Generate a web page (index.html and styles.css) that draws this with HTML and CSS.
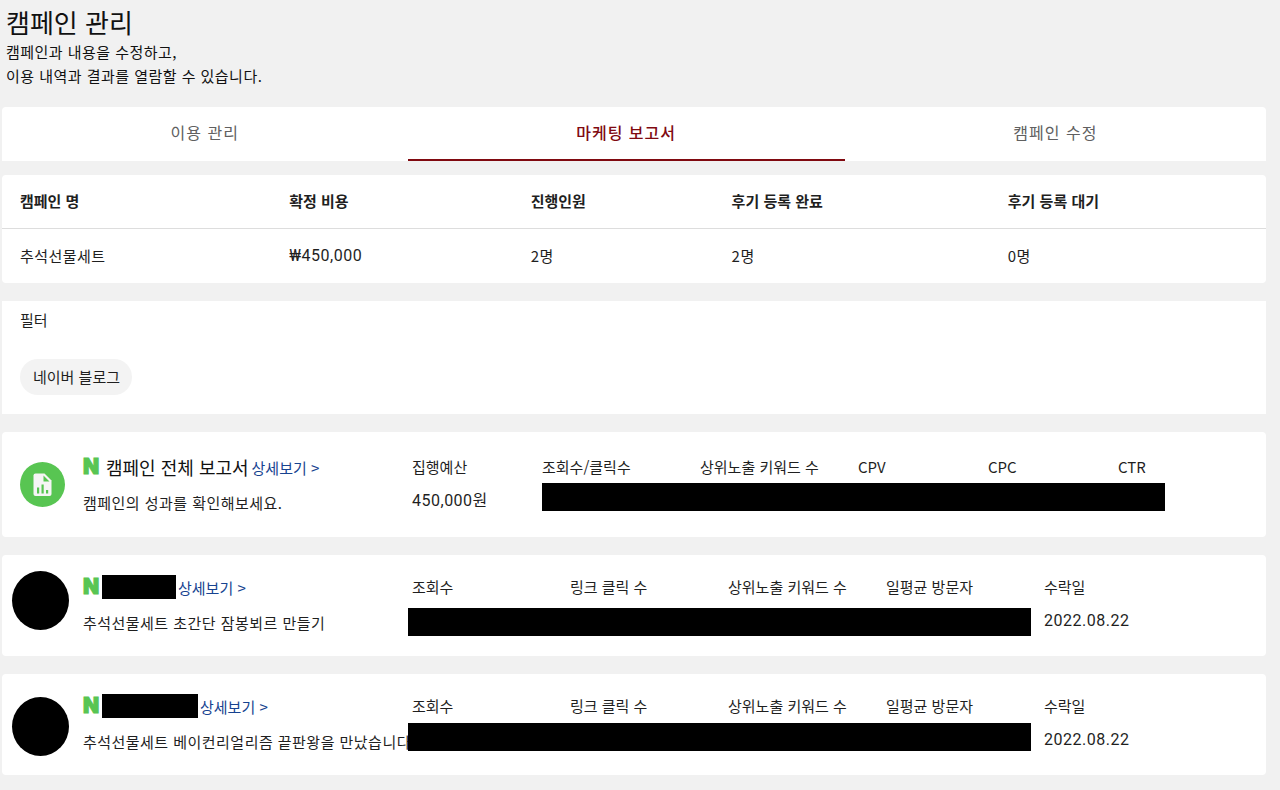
FILE: index.html
```html
<!DOCTYPE html>
<html lang="ko">
<head>
<meta charset="utf-8">
<meta name="viewport" content="width=device-width, initial-scale=1">
<title>캠페인 관리</title>
<link rel="stylesheet" href="styles.css">
</head>
<body>
<main class="page">
  <header class="page-head">
    <h1 class="page-title">캠페인 관리</h1>
    <p class="page-desc">캠페인과 내용을 수정하고,<br>이용 내역과 결과를 열람할 수 있습니다.</p>
  </header>

  <nav class="tabs" role="tablist">
    <button class="tab" type="button" role="tab" aria-selected="false">이용 관리</button>
    <button class="tab tab-active" type="button" role="tab" aria-selected="true">마케팅 보고서</button>
    <button class="tab" type="button" role="tab" aria-selected="false">캠페인 수정</button>
  </nav>

  <table class="summary">
    <colgroup><col class="col-name"><col class="col-cost"><col class="col-people"><col class="col-review"><col class="col-review"></colgroup>
    <thead>
      <tr><th scope="col">캠페인 명</th><th scope="col">확정 비용</th><th scope="col">진행인원</th><th scope="col">후기 등록 완료</th><th scope="col">후기 등록 대기</th></tr>
    </thead>
    <tbody>
      <tr><td>추석선물세트</td><td class="cost">₩450,000</td><td>2명</td><td>2명</td><td>0명</td></tr>
    </tbody>
  </table>

  <section class="filter">
    <h2 class="filter-title">필터</h2>
    <button class="chip" type="button">네이버 블로그</button>
  </section>

  <article class="report report-total">
    <div class="avatar">
      <svg class="report-icon" viewBox="0 0 45 45" aria-hidden="true">
        <circle cx="22.500" cy="22.500" r="22.500" fill="#58c552"/>
        <path fill="#f5f5f5" d="M15.500 11.500H24.500L31.500 18.500V32a2 2 0 0 1-2 2H15.500a2 2 0 0 1-2-2V13.500a2 2 0 0 1 2-2z"/>
        <path fill="#58c552" d="M23.500 13.500V19.500H29.500zM17 25.500h2.200v6H17zM21.500 22.500h2.200v9h-2.200zM26 28h2.200v3.500H26z"/>
      </svg>
    </div>
    <div class="intro">
      <div class="intro-head"><span class="logo">N</span><h2 class="intro-title">캠페인 전체 보고서</h2><a class="more" href="#total">상세보기 &gt;</a></div>
      <p class="intro-desc">캠페인의 성과를 확인해보세요.</p>
    </div>
    <div class="metrics metrics-total">
      <span class="label">집행예산</span><span class="label">조회수/클릭수</span><span class="label">상위노출 키워드 수</span><span class="label">CPV</span><span class="label">CPC</span><span class="label">CTR</span>
      <span class="value">450,000원</span><span class="mask mask-total"></span>
    </div>
  </article>

  <article class="report">
    <div class="avatar"><span class="face"></span></div>
    <div class="intro">
      <div class="intro-head"><span class="logo">N</span><span class="name-mask name-short"></span><a class="more" href="#post-1">상세보기 &gt;</a></div>
      <p class="intro-desc">추석선물세트 초간단 잠봉뵈르 만들기</p>
    </div>
    <div class="metrics">
      <span class="label">조회수</span><span class="label">링크 클릭 수</span><span class="label">상위노출 키워드 수</span><span class="label">일평균 방문자</span><span class="label">수락일</span>
      <span class="mask"></span><span class="value">2022.08.22</span>
    </div>
  </article>

  <article class="report">
    <div class="avatar"><span class="face face-low"></span></div>
    <div class="intro">
      <div class="intro-head"><span class="logo">N</span><span class="name-mask name-long"></span><a class="more" href="#post-2">상세보기 &gt;</a></div>
      <p class="intro-desc">추석선물세트 베이컨리얼리즘 끝판왕을 만났습니다</p>
    </div>
    <div class="metrics">
      <span class="label">조회수</span><span class="label">링크 클릭 수</span><span class="label">상위노출 키워드 수</span><span class="label">일평균 방문자</span><span class="label">수락일</span>
      <span class="mask mask-high"></span><span class="value">2022.08.22</span>
    </div>
  </article>
</main>
</body>
</html>
```
FILE: styles.css
```css
* { box-sizing: border-box; }

body {
  margin: 0;
  background: #f1f1f1;
  color: #1f1f1f;
  font-family: "Noto Sans CJK KR", sans-serif;
  font-size: 15px;
  line-height: 24px;
}

h1, h2, p { margin: 0; font-weight: 400; }

.page { padding: 4px 14px 14px 2px; }

.page-head { padding: 0 4px; color: #111; }
.page-title { font-size: 26px; line-height: 36px; }
.page-desc { letter-spacing: 0.03125em; }

.tabs {
  display: flex;
  height: 54px;
  margin-top: 19px;
  background: #fff;
  border-radius: 4px 4px 0 0;
}
.tab {
  flex: 1 1 auto;
  padding: 0 16px 2px;
  border: 0;
  border-bottom: 2px solid transparent;
  background: none;
  color: #606060;
  font: inherit;
  font-size: 16px;
  letter-spacing: 1px;
}
.tab-active {
  color: #800910;
  border-bottom-color: #800910;
  font-weight: 500;
}

.summary {
  width: 100%;
  margin-top: 14px;
  table-layout: fixed;
  border-spacing: 0;
  background: #fff;
  border-radius: 4px;
}
.col-name { width: 21.3%; }
.col-cost { width: 19.1%; }
.col-people { width: 15.9%; }
.summary th,
.summary td { height: 54px; padding: 0 18px; text-align: left; }
.summary th { padding-bottom: 2px; border-bottom: 1px solid #ddd; font-weight: 700; }
.summary td { letter-spacing: 0.03125em; }
.summary .cost { font-family: Roboto, "Noto Sans CJK KR", sans-serif; font-size: 16px; }

.filter {
  margin-top: 18px;
  padding: 7px 18px 19px;
  background: #fff;
}
.filter-title { font-size: 15px; line-height: 24px; }
.chip {
  display: block;
  height: 36px;
  margin-top: 27px;
  padding: 0 12px 0 13px;
  border: 0;
  border-radius: 18px;
  background: #f3f3f3;
  color: inherit;
  font: inherit;
}

.report {
  display: flex;
  margin-top: 18px;
  padding-bottom: 21px;
  background: #fff;
  border-radius: 4px;
}
.report-total { padding: 3px 0 22px; }

.avatar { flex: 0 0 81px; height: 80px; padding-left: 10px; }
.report-icon { display: block; width: 45px; height: 45px; margin: 27px 8px 0; }
.face {
  display: block;
  width: 57px;
  height: 59px;
  margin-top: 16px;
  border-radius: 50%;
  background: #000;
}
.face-low { margin-top: 23px; }

.intro { flex: 0 0 329px; padding-top: 20px; white-space: nowrap; }
.intro-head { display: flex; align-items: center; height: 24px; }
.logo {
  width: 19px;
  color: #58c552;
  font-family: Inter, sans-serif;
  font-size: 21px;
  font-weight: 900;
  -webkit-text-stroke: 1px #58c552;
}
.intro-title { margin: 0 3px 0 4px; font-size: 18px; color: #111; }
.more { padding-top: 2px; color: #174390; text-decoration: none; }
.intro-desc { margin-top: 12px; letter-spacing: 0.03125em; }
.name-mask { height: 24px; margin-right: 2px; background: #000; }
.name-short { width: 74px; }
.name-long { width: 96px; }

.metrics {
  display: grid;
  flex: 1 1 0;
  grid-template-columns: repeat(4, 158px) 1fr;
  grid-template-rows: 24px 28px;
  row-gap: 8px;
  padding-top: 20px;
}
.metrics-total { grid-template-columns: 130px 158px 158px 130px 130px 1fr; }
.value {
  align-self: center;
  font-family: Roboto, "Noto Sans CJK KR", sans-serif;
  font-size: 16px;
  letter-spacing: 0.03125em;
}
.mask {
  grid-column: span 4;
  z-index: 1;
  height: 28px;
  margin: 1px 13px 0 -4px;
  background: #000;
}
.mask-total { grid-column: span 5; margin: -4px 101px 0 0; }
.mask-high { margin-top: -3px; }
```
